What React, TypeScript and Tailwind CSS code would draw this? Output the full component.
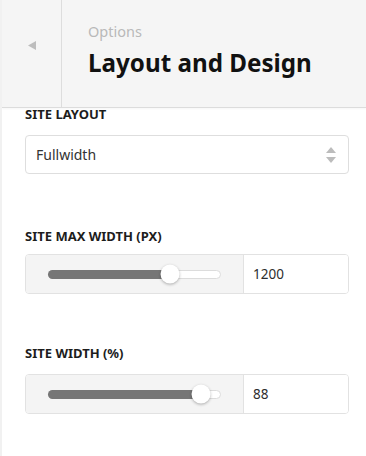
import React from "react";

function Label({ children, className = "" }: { children: React.ReactNode; className?: string }) {
  return (
    <div className={`text-[13px] font-bold uppercase leading-[16px] text-[#1d1d1d] ${className}`}>
      {children}
    </div>
  );
}

function RangeRow({ value, pct }: { value: string; pct: number }) {
  return (
    <div className="flex h-[40px] w-[324px] overflow-hidden rounded-[4px] border border-[#e2e2e2]">
      <div className="flex w-[218px] items-center border-r border-[#e2e2e2] bg-[#f4f4f4] pl-[22px]">
        <div className="relative h-[9px] w-[173px] rounded-full border border-[#dcdcdc] bg-white">
          <div
            className="absolute left-[-1px] top-[-1px] h-[9px] rounded-full bg-[#767676]"
            style={{ width: `${pct}%` }}
          />
          <div
            className="absolute top-1/2 h-[19px] w-[19px] -translate-x-1/2 -translate-y-1/2 rounded-full bg-white shadow-[0_1px_3px_rgba(0,0,0,0.3)]"
            style={{ left: `${pct}%` }}
          />
        </div>
      </div>
      <div className="flex flex-1 items-center bg-white pl-[9px] text-[13.5px] text-[#2d2d2d]">{value}</div>
    </div>
  );
}

export default function App() {
  return (
    <div
      className="relative h-[456px] w-[366px] overflow-hidden border-l-2 border-[#f1f1f1] bg-white"
      style={{ fontFamily: '"Noto Sans", "Open Sans", sans-serif' }}
    >
      <header className="relative z-10 flex h-[108px] border-b border-[#dcdcdc] bg-[#f5f5f5] shadow-[0_1px_2px_rgba(0,0,0,0.04)]">
        <div className="flex w-[60px] items-center justify-center border-r border-[#dddddd]">
          <svg width="8" height="9" viewBox="0 0 8 9" className="-mt-[17px] ml-[1px]">
            <path d="M8 0 L0 4.5 L8 9 Z" fill="#bdbdbd" />
          </svg>
        </div>
        <div className="pl-[26px] pt-[21px]">
          <div className="text-[14.5px] leading-[20px] text-[#b9b9b9]">Options</div>
          <div className="mt-[7px] text-[24.2px] font-bold leading-[30px] text-[#111]">Layout and Design</div>
        </div>
      </header>

      <div className="-mt-[2px] pl-[23px]">
        <Label>Site Layout</Label>
        <div className="mt-[13px] flex h-[39px] w-[324px] items-center justify-between rounded-[4px] border border-[#dedede] bg-white pl-[10px] pr-[12px] text-[14px] text-[#333]">
          <span>Fullwidth</span>
          <svg width="10" height="16" viewBox="0 0 10 16">
            <path d="M5 0 L10 6 L0 6 Z" fill="#bcbcbc" />
            <path d="M0 10 L10 10 L5 16 Z" fill="#bcbcbc" />
          </svg>
        </div>

        <Label className="mt-[54px]">Site Max Width (px)</Label>
        <div className="mt-[10px]">
          <RangeRow value="1200" pct={70.5} />
        </div>

        <Label className="mt-[51px]">Site Width (%)</Label>
        <div className="mt-[13px]">
          <RangeRow value="88" pct={89} />
        </div>
      </div>
    </div>
  );
}
